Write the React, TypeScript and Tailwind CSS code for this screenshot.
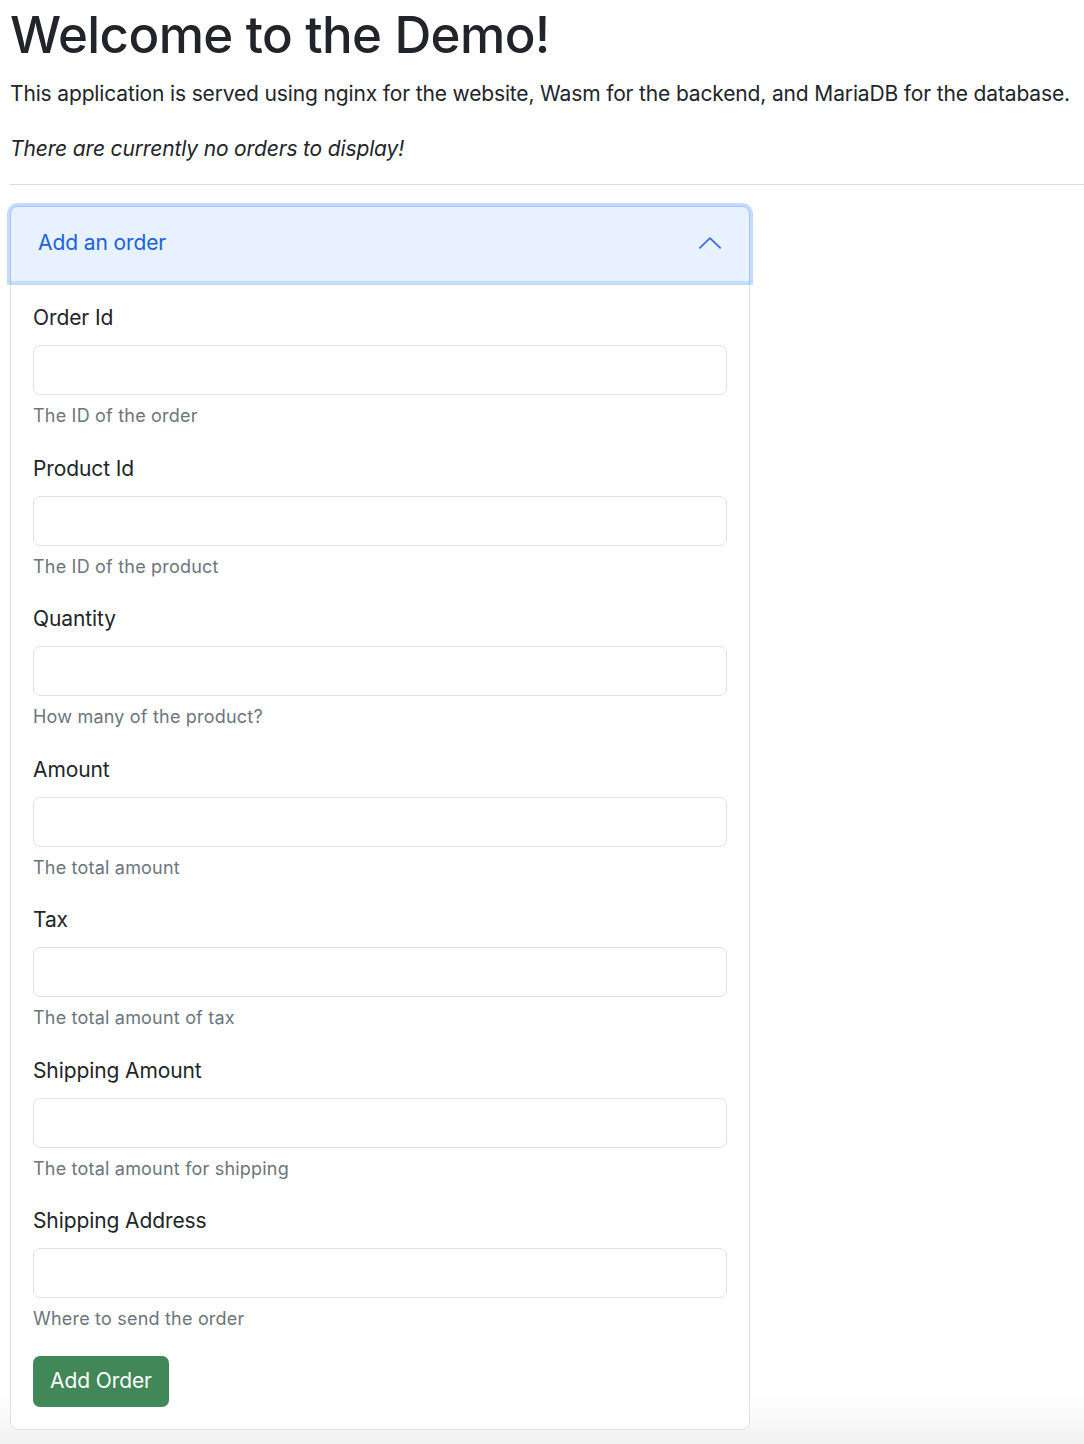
import { useState } from 'react';

const fields = [
  { id: 'orderId', label: 'Order Id', help: 'The ID of the order' },
  { id: 'productId', label: 'Product Id', help: 'The ID of the product' },
  { id: 'quantity', label: 'Quantity', help: 'How many of the product?' },
  { id: 'amount', label: 'Amount', help: 'The total amount' },
  { id: 'tax', label: 'Tax', help: 'The total amount of tax' },
  { id: 'shippingAmount', label: 'Shipping Amount', help: 'The total amount for shipping' },
  { id: 'shippingAddress', label: 'Shipping Address', help: 'Where to send the order' },
];

export default function App() {
  const [open, setOpen] = useState(true);

  return (
    <div
      className="min-h-screen bg-[linear-gradient(to_bottom,#ffffff_96.5%,#f1f1f2)] pl-[10px] text-[#212529]"
      style={{ fontFamily: 'Inter, "Liberation Sans", Arial, sans-serif' }}
    >
      {/* Header */}
      <h1 className="m-0 pt-[4px] text-[51px] font-medium leading-[62px] tracking-[-0.6px]">Welcome to the Demo!</h1>
      <p className="mt-[12px] mb-[24px] text-[21px] leading-[31px] tracking-[-0.15px]">
        This application is served using nginx for the website, Wasm for the backend, and MariaDB for the database.
      </p>
      <p className="m-0 text-[21px] italic leading-[31px] tracking-[-0.15px]">There are currently no orders to display!</p>
      <hr className="mt-[20px] mb-[21px] border-t-[1.5px] border-[#d9d9d9]" />

      {/* Accordion */}
      <div className="w-[740px] rounded-[8px] border border-[#dee2e6] bg-white">
        <button
          onClick={() => setOpen(!open)}
          className="relative z-10 flex h-[74px] w-full items-center justify-between rounded-t-[7px] bg-[#e7f1ff] pb-[3px] pl-[27px] pr-[25px] text-left text-[21px] tracking-[-0.1px] text-[#1a62e0] shadow-[0_0_0_4px_rgba(13,110,253,0.25)]"
        >
          <span>Add an order</span>
          <svg className={`h-[28px] w-[28px] ${open ? '' : 'rotate-180'}`} viewBox="0 0 16 16" fill="none" stroke="#3a6fe0" strokeWidth="1" strokeLinecap="round" strokeLinejoin="round">
            <path d="M2.2 10.8 8 5.2l5.8 5.6" />
          </svg>
        </button>
        {open && (
          <div className="px-[22px] pt-[21px] pb-[22px]">
            {fields.map((f) => (
              <div key={f.id} className="mb-[23.5px]">
                <label htmlFor={f.id} className="mb-[12px] block text-[21px] leading-[31px] tracking-[-0.1px]">
                  {f.label}
                </label>
                <input
                  id={f.id}
                  type="text"
                  className="block h-[50px] w-full rounded-[7px] border-[1.5px] border-[#dee2e6] bg-white px-[16px] text-[21px] outline-none"
                />
                <div className="mt-[7px] text-[18px] leading-[27px] tracking-[0.2px] text-[#6c757d]">{f.help}</div>
              </div>
            ))}
            <button className="h-[51px] rounded-[7px] bg-[#418758] px-[17px] text-[21px] tracking-[-0.1px] text-white">Add Order</button>
          </div>
        )}
      </div>
      <div className="h-[14px]" />
    </div>
  );
}
